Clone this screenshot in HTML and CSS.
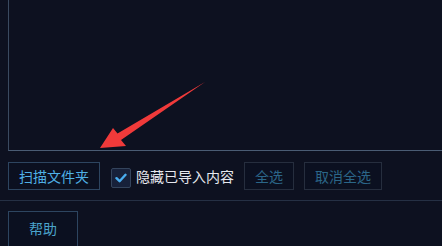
FILE: index.html
```html
<!DOCTYPE html>
<html lang="zh">
<head>
<meta charset="utf-8">
<link rel="stylesheet" href="styles.css">
</head>
<body>
<div class="app">
  <div class="panel"></div>
  <div class="toolbar">
    <button class="btn btn-primary btn-scan">扫描文件夹</button>
    <label class="check">
      <span class="box">
        <svg width="12" height="10" viewBox="0 0 12 10"><path d="M1.5 5.2 L4.6 8.2 L10.5 1.8" fill="none" stroke="#4aaef0" stroke-width="2.4" stroke-linejoin="round" stroke-linecap="round"/></svg>
      </span>
      <span class="check-label">隐藏已导入内容</span>
    </label>
    <button class="btn btn-disabled btn-all">全选</button>
    <button class="btn btn-disabled btn-cancel">取消全选</button>
  </div>
  <div class="footer">
    <button class="btn btn-primary btn-help">帮助</button>
  </div>
  <svg class="arrow" width="442" height="246" viewBox="0 0 442 246">
    <polygon points="100,148 113,128 117.5,133.5 205,82 121,140 126,146" fill="#f03a3a"/>
  </svg>
</div>
</body>
</html>
```
FILE: styles.css
```css
html, body {
  margin: 0;
  padding: 0;
  background: #0d1120;
  overflow: hidden;
}
body {
  width: 442px;
  height: 246px;
  font-family: "Noto Sans CJK SC", "Noto Sans", sans-serif;
}
.app {
  position: relative;
  width: 442px;
  height: 246px;
  overflow: hidden;
}
.panel {
  height: 150px;
  margin-left: 8px;
  margin-right: -20px;
  border-left: 1px solid #3a4a60;
  border-bottom: 1px solid #4a5c74;
}
.toolbar {
  display: flex;
  align-items: center;
  height: 49px;
  padding-left: 8px;
  border-bottom: 1px solid #253044;
}
.btn {
  font-family: inherit;
  font-size: 14px;
  line-height: 20px;
  height: 28px;
  padding: 0 10px;
  background: #0b1020;
  cursor: pointer;
  box-sizing: border-box;
}
.btn-primary {
  border: 1px solid #2d4560;
  color: #4fb0e6;
}
.btn-scan {
  width: 92px;
}
.btn-disabled {
  border: 1px solid #262e3e;
  color: #2b6688;
}
.btn-all {
  width: 50px;
  margin-left: 10px;
}
.btn-cancel {
  width: 78px;
  margin-left: 10px;
}
.check {
  display: flex;
  align-items: center;
  margin-left: 11px;
}
.box {
  width: 20px;
  height: 20px;
  box-sizing: border-box;
  border: 1px solid #34445c;
  background: #17213a;
  border-radius: 2px;
  display: flex;
  align-items: center;
  justify-content: center;
  margin-top: 4px;
}
.check-label {
  margin-left: 5px;
  font-size: 14px;
  color: #e6e8ee;
}
.footer {
  padding: 10px 0 0 8px;
}
.btn-help {
  width: 70px;
  height: 40px;
  padding-top: 6px;
  vertical-align: top;
  display: flex;
  align-items: flex-start;
  justify-content: center;
  color: #4aa4cc;
}
.arrow {
  position: absolute;
  left: 0;
  top: 0;
  pointer-events: none;
}
```
